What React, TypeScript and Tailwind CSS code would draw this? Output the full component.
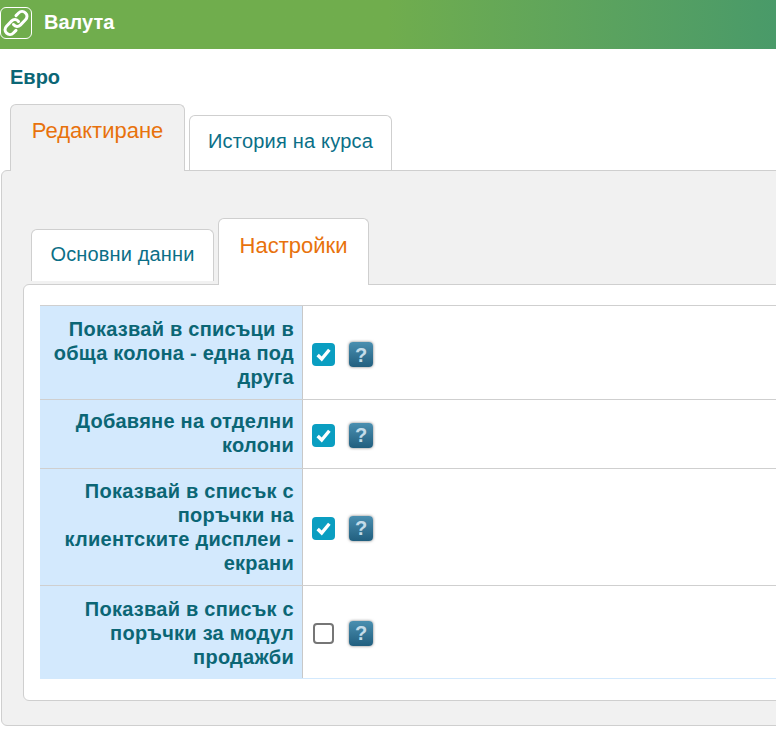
const rows = [
  { label: ["Показвай в списъци в", "обща колона - една под", "друга"], checked: true, h: "h-[94px]", text: "pt-px", ctl: "pt-[4px]" },
  { label: ["Добавяне на отделни", "колони"], checked: true, h: "h-[69px]", text: "pb-[2px]", ctl: "pt-[2px]" },
  { label: ["Показвай в списък с", "поръчки на", "клиентските дисплеи -", "екрани"], checked: true, h: "h-[117px]", text: "pb-px", ctl: "pt-[2px]" },
  { label: ["Показвай в списък с", "поръчки за модул", "продажби"], checked: false, h: "h-[93px]", text: "pt-px", ctl: "pt-[2px]" },
];

function LinkIcon() {
  return (
    <svg viewBox="0 0 28 28" className="h-[28px] w-[28px]" fill="none" stroke="#fff" strokeWidth="3" strokeLinecap="round" strokeLinejoin="round">
      <path d="M11.5 15.5c2 2.6 5 2.4 6.8.6l5.2-5.4c2-2.1 2-5-.1-6.9-2-1.9-4.8-1.8-6.8.2l-2.6 2.6" />
      <path d="M16.5 12.5c-2-2.6-5-2.4-6.8-.6l-5.2 5.4c-2 2.1-2 5 .1 6.9 2 1.9 4.8 1.8 6.8-.2l2.6-2.6" />
    </svg>
  );
}

function Check({ checked }: { checked: boolean }) {
  if (!checked) {
    return <span className="ml-px mr-px h-[21px] w-[21px] rounded-[4px] border-2 border-[#767676] bg-white" />;
  }
  return (
    <span className="flex h-[23px] w-[23px] items-center justify-center rounded-[4px] bg-[#0a9ec1]">
      <svg viewBox="0 0 16 16" className="h-[17px] w-[17px]" fill="none" stroke="#fff" strokeWidth="3.2">
        <path d="M2.5 8.5 6.3 12.2 13.5 3.5" />
      </svg>
    </span>
  );
}

function Help() {
  return (
    <span className="ml-[14px] flex h-[25px] w-[24px] items-center justify-center rounded-[4px] bg-gradient-to-b from-[#4a8fb0] to-[#215f7f] text-[20px] leading-none font-bold text-[#c4dce9] shadow-[0_0_3px_#777]">
      ?
    </span>
  );
}

export default function App() {
  return (
    <div className="h-[740px] w-[776px] overflow-hidden bg-white font-['Liberation_Sans',Arial,sans-serif]">
      <header className="flex h-[49px] items-center bg-gradient-to-r from-[#70ad4d] from-50% to-[#499a69]">
        <span className="mb-[3px] flex h-[32px] w-[32px] items-center justify-center rounded-[6px] border border-white">
          <LinkIcon />
        </span>
        <span className="mb-[5px] ml-[12px] text-[20px] font-bold text-white">Валута</span>
      </header>

      <h1 className="mt-[17px] ml-[10px] h-[22px] text-[20px] leading-[22px] font-bold text-[#0b6675]">Евро</h1>

      <div className="mt-[16px] ml-[10px] flex h-[67px] items-end gap-[4px]">
        <div className="relative z-10 h-[67px] w-[175px] rounded-t-[6px] border border-b-0 border-[#cfcfcf] bg-[#f1f1f1] pt-[13px] text-center text-[22px] leading-[26px] text-[#e8720c]">
          Редактиране
        </div>
        <div className="mb-px h-[55px] w-[203px] rounded-t-[6px] border border-b-0 border-[#cfcfcf] bg-white pt-[13px] text-center text-[20px] leading-[24px] tracking-[0.2px] text-[#0b6f87]">
          История на курса
        </div>
      </div>

      <div className="-mt-px ml-px h-[556px] w-[800px] rounded-[6px] border border-[#cfcfcf] bg-[#f1f1f1] pt-[47px] pl-[21px]">
        <div className="ml-[8px] flex h-[66px] items-end gap-[4px]">
          <div className="mb-[3px] h-[52px] w-[183px] rounded-t-[6px] border border-b-0 border-[#cfcfcf] bg-white pt-[12px] text-center text-[20px] leading-[24px] tracking-[0.15px] text-[#0b6f87]">
            Основни данни
          </div>
          <div className="relative z-10 -mb-px h-[67px] w-[151px] rounded-t-[6px] border border-b-0 border-[#cfcfcf] bg-white pt-[14px] text-center text-[22px] leading-[26px] text-[#e8720c]">
            Настройки
          </div>
        </div>
        <div className="h-[417px] rounded-[6px] border border-[#cfcfcf] bg-white pt-[20px] pl-[16px]">
          <div className="border-b border-[#d3e9fd]">
            {rows.map((r, i) => (
              <div key={i} className={`flex ${r.h} border-t border-[#cfcfcf]`}>
                <div className={`flex w-[263px] flex-col justify-center border-r border-[#c8c8c8] bg-[#d3e9fd] ${r.text} pr-[8px] text-right text-[20px] leading-[24px] font-bold tracking-[0.25px] text-[#0b6675]`}>
                  {r.label.map((l) => (
                    <div key={l} className="whitespace-nowrap">{l}</div>
                  ))}
                </div>
                <div className={`flex items-center ${r.ctl} pl-[9px]`}>
                  <Check checked={r.checked} />
                  <Help />
                </div>
              </div>
            ))}
          </div>
        </div>
      </div>
    </div>
  );
}
